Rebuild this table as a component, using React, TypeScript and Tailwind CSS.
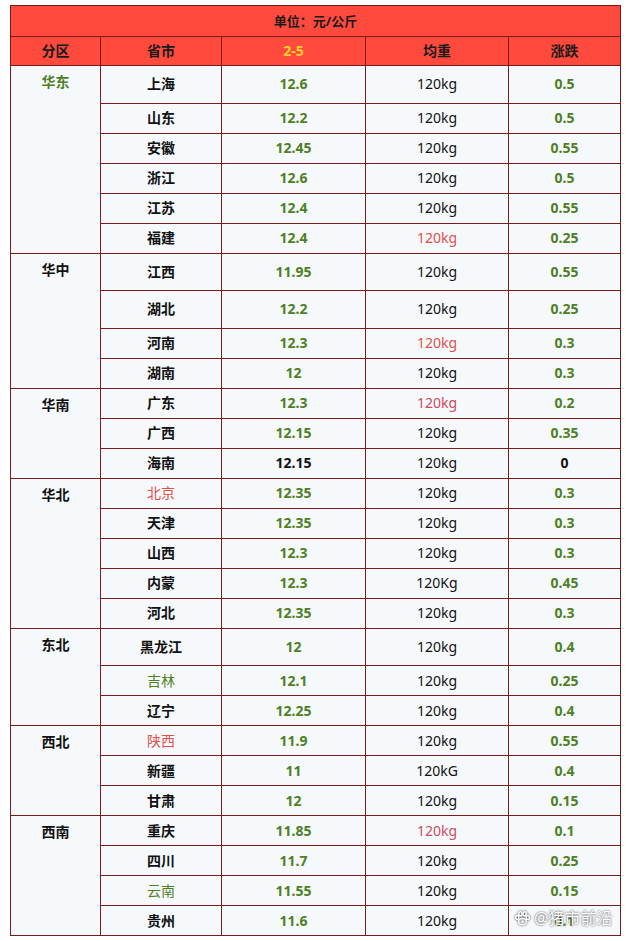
type Tone = "black" | "green" | "red" | "pink";

type Row = {
  prov: string;
  provTone?: Tone;
  price: string;
  priceTone?: Tone;
  weight: string;
  weightTone?: Tone;
  change: string;
  changeTone?: Tone;
  h?: "tall";
};

type Group = { region: string; regionTone?: Tone; rows: Row[] };

const groups: Group[] = [
  {
    region: "华东",
    regionTone: "green",
    rows: [
      { prov: "上海", price: "12.6", weight: "120kg", change: "0.5", h: "tall" },
      { prov: "山东", price: "12.2", weight: "120kg", change: "0.5" },
      { prov: "安徽", price: "12.45", weight: "120kg", change: "0.55" },
      { prov: "浙江", price: "12.6", weight: "120kg", change: "0.5" },
      { prov: "江苏", price: "12.4", weight: "120kg", change: "0.55" },
      { prov: "福建", price: "12.4", weight: "120kg", weightTone: "red", change: "0.25" },
    ],
  },
  {
    region: "华中",
    rows: [
      { prov: "江西", price: "11.95", weight: "120kg", change: "0.55", h: "tall" },
      { prov: "湖北", price: "12.2", weight: "120kg", change: "0.25", h: "tall" },
      { prov: "河南", price: "12.3", weight: "120kg", weightTone: "red", change: "0.3" },
      { prov: "湖南", price: "12", weight: "120kg", change: "0.3" },
    ],
  },
  {
    region: "华南",
    rows: [
      { prov: "广东", price: "12.3", weight: "120kg", weightTone: "pink", change: "0.2" },
      { prov: "广西", price: "12.15", weight: "120kg", change: "0.35" },
      { prov: "海南", price: "12.15", priceTone: "black", weight: "120kg", change: "0", changeTone: "black" },
    ],
  },
  {
    region: "华北",
    rows: [
      { prov: "北京", provTone: "red", price: "12.35", weight: "120kg", change: "0.3" },
      { prov: "天津", price: "12.35", weight: "120kg", change: "0.3" },
      { prov: "山西", price: "12.3", weight: "120kg", change: "0.3" },
      { prov: "内蒙", price: "12.3", weight: "120Kg", change: "0.45" },
      { prov: "河北", price: "12.35", weight: "120kg", change: "0.3" },
    ],
  },
  {
    region: "东北",
    rows: [
      { prov: "黑龙江", price: "12", weight: "120kg", change: "0.4", h: "tall" },
      { prov: "吉林", provTone: "green", price: "12.1", weight: "120kg", change: "0.25" },
      { prov: "辽宁", price: "12.25", weight: "120kg", change: "0.4" },
    ],
  },
  {
    region: "西北",
    rows: [
      { prov: "陕西", provTone: "red", price: "11.9", weight: "120kg", change: "0.55" },
      { prov: "新疆", price: "11", weight: "120kG", change: "0.4" },
      { prov: "甘肃", price: "12", weight: "120kg", change: "0.15" },
    ],
  },
  {
    region: "西南",
    rows: [
      { prov: "重庆", price: "11.85", weight: "120kg", weightTone: "pink", change: "0.1" },
      { prov: "四川", price: "11.7", weight: "120kg", change: "0.25" },
      { prov: "云南", provTone: "green", price: "11.55", weight: "120kg", change: "0.15" },
      { prov: "贵州", price: "11.6", weight: "120kg", change: "0.1" },
    ],
  },
];

const toneClass: Record<Tone, string> = {
  black: "text-[#111111]",
  green: "text-[#4f7f24]",
  red: "text-[#e0504a]",
  pink: "text-[#cf4a5c]",
};

const cell = "border border-[#7a1b1b] bg-[#f6f9fc] text-center align-middle p-0";

function Paw() {
  return (
    <svg width="17" height="17" viewBox="0 0 16 16" className="drop-shadow-[0_0_1px_rgba(0,0,0,0.8)]">
      <g fill="none" stroke="#ffffff" strokeWidth="1.4">
        <ellipse cx="8" cy="11" rx="3.6" ry="3" />
        <ellipse cx="3" cy="7" rx="1.5" ry="1.9" />
        <ellipse cx="6" cy="3.6" rx="1.5" ry="2" />
        <ellipse cx="10" cy="3.6" rx="1.5" ry="2" />
        <ellipse cx="13" cy="7" rx="1.5" ry="1.9" />
      </g>
    </svg>
  );
}

export default function App() {
  return (
    <div className="relative w-[626px] h-[941px] bg-white pt-[5px] pl-[10px] font-['Noto_Sans','Noto_Sans_CJK_SC',sans-serif] text-[14px] leading-[20px]">
      <table className="w-[610px] table-fixed border-collapse border border-[#7a1b1b]">
        <colgroup>
          <col className="w-[90px]" />
          <col className="w-[121px]" />
          <col className="w-[144px]" />
          <col className="w-[143px]" />
          <col className="w-[112px]" />
        </colgroup>
        <thead>
          <tr className="h-[31px]">
            <th colSpan={5} className="border border-[#7a1b1b] bg-[#ff4a3d] text-[13px] font-bold text-[#1a1a1a]">
              单位：元/公斤
            </th>
          </tr>
          <tr className="h-[29px]">
            <th className="border border-[#7a1b1b] bg-[#ff4a3d] text-[14px] font-bold text-[#1a1a1a]">分区</th>
            <th className="border border-[#7a1b1b] bg-[#ff4a3d] text-[14px] font-bold text-[#1a1a1a]">省市</th>
            <th className="border border-[#7a1b1b] bg-[#ff4a3d] text-[14px] font-bold text-[#ffd22e]">2-5</th>
            <th className="border border-[#7a1b1b] bg-[#ff4a3d] text-[14px] font-bold text-[#1a1a1a]">均重</th>
            <th className="border border-[#7a1b1b] bg-[#ff4a3d] text-[14px] font-bold text-[#1a1a1a]">涨跌</th>
          </tr>
        </thead>
        <tbody>
          {groups.map((g) =>
            g.rows.map((r, i) => (
              <tr key={g.region + r.prov} className={r.h === "tall" ? "h-[37.5px]" : "h-[30px]"}>
                {i === 0 && (
                  <td
                    rowSpan={g.rows.length}
                    className={`border border-[#7a1b1b] bg-[#f6f9fc] text-center align-top pt-[6px] font-bold ${toneClass[g.regionTone ?? "black"]}`}
                  >
                    {g.region}
                  </td>
                )}
                <td className={`${cell} ${r.provTone && r.provTone !== "black" ? "font-normal" : "font-bold"} ${toneClass[r.provTone ?? "black"]}`}>
                  {r.prov}
                </td>
                <td className={`${cell} font-bold ${toneClass[r.priceTone ?? "green"]}`}>{r.price}</td>
                <td className={`${cell} font-normal ${toneClass[r.weightTone ?? "black"]}`}>{r.weight}</td>
                <td className={`${cell} font-bold ${toneClass[r.changeTone ?? "green"]}`}>{r.change}</td>
              </tr>
            ))
          )}
        </tbody>
      </table>
      <div className="absolute left-[514px] top-[908px] flex items-center gap-[3px] text-[16px] text-white [text-shadow:0_0_2px_rgba(0,0,0,0.85)]">
        <Paw />
        <span>@猪市前沿</span>
      </div>
    </div>
  );
}
